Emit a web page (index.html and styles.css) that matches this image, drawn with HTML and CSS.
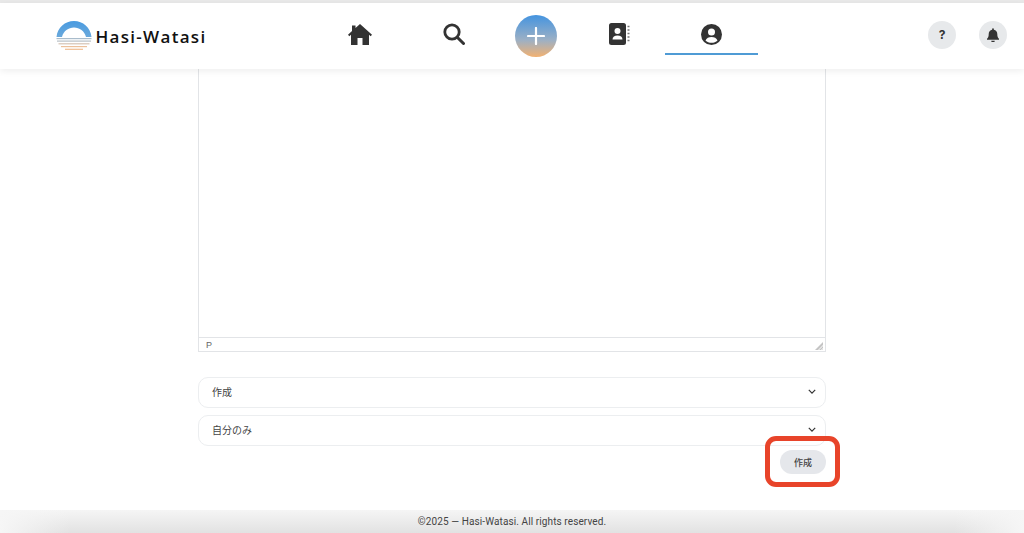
FILE: index.html
```html
<!DOCTYPE html>
<html lang="ja">
<head>
<meta charset="utf-8">
<title>Hasi-Watasi</title>
<link rel="stylesheet" href="styles.css">
</head>
<body>
<div class="page">
  <div class="topstrip"></div>
  <header class="header">
    <a class="logo">
      <svg class="logo-mark" viewBox="0 0 36 32" width="36" height="32">
        <defs>
          <linearGradient id="lg" x1="0" y1="0" x2="0" y2="1">
            <stop offset="0" stop-color="#4a9be0"/>
            <stop offset="1" stop-color="#6aa9dc"/>
          </linearGradient>
        </defs>
        <path d="M0.5 17C1.5 7.500 9 1 18 1s16.500 6.500 17.500 16H30C28.500 11 23.500 7.500 18 7.500S7.500 11 6 17Z" fill="url(#lg)"/>
        <rect x="0.500" y="18" width="35" height="1.200" fill="#a9bccb"/>
        <rect x="1" y="20.500" width="34" height="1.200" fill="#b8bfc5"/>
        <rect x="2.500" y="23.200" width="31" height="1.200" fill="#d5c3b3"/>
        <rect x="5" y="26" width="26" height="1.200" fill="#ecc09b"/>
        <rect x="9" y="28.700" width="18" height="1.200" fill="#f0bd91"/>
      </svg>
      <span class="logo-text">Hasi-Watasi</span>
    </a>
    <nav class="nav">
      <a class="nav-item">
        <svg class="icon-home" viewBox="0 0 24 21" width="24" height="21"><path d="M12 0 24 10.700l-1.300 1.500L21 10.800V21h-6.500v-7h-5v7H3V10.800l-1.700 1.400L0 10.700 4 7.100V1.500h3.500v2.500Z" fill="#333"/></svg>
      </a>
      <a class="nav-item">
        <svg class="icon-search" viewBox="0 0 22 22" width="22" height="22"><circle cx="9" cy="9" r="7.200" fill="none" stroke="#333" stroke-width="2.800"/><path d="M14.500 14.500 20.500 20.500" stroke="#333" stroke-width="3" stroke-linecap="round"/></svg>
      </a>
      <a class="nav-plus">
        <svg viewBox="0 0 18 18" width="18" height="18"><path d="M9 1v16M1 9h16" stroke="#fff" stroke-width="2.200" stroke-linecap="round"/></svg>
      </a>
      <a class="nav-item">
        <svg class="icon-book" viewBox="0 0 21 22" width="21" height="22">
          <path d="M2.500 0h12A2.500 2.500 0 0 1 17 2.500v17a2.500 2.500 0 0 1-2.500 2.500h-12A2.500 2.500 0 0 1 0 19.500v-17A2.500 2.500 0 0 1 2.500 0Z" fill="#333"/>
          <circle cx="8.500" cy="8" r="3" fill="#fff"/>
          <path d="M3.500 16.500c0-2.500 2-4 5-4s5 1.500 5 4Z" fill="#fff"/>
          <path d="M18.500 3.500h2M18.500 7h2M18.500 10.500h2M18.500 14h2M18.500 17.500h2" stroke="#777" stroke-width="1.500"/>
        </svg>
      </a>
      <a class="nav-item is-active">
        <svg viewBox="0 0 21 21" width="21" height="21">
          <circle cx="10.500" cy="10.500" r="10.500" fill="#333"/>
          <circle cx="10.500" cy="8" r="3.500" fill="#fff"/>
          <path d="M4.500 16.500c1-2.500 3.200-3.500 6-3.500s5 1 6 3.500c-1.500 1.500-3.700 2.300-6 2.300s-4.500-.8-6-2.300Z" fill="#fff"/>
        </svg>
      </a>
    </nav>
    <div class="actions">
      <button class="round-btn help">?</button>
      <button class="round-btn">
        <svg viewBox="0 0 14 16" width="12" height="14"><path d="M7 0a1 1 0 0 1 1 1v.8c2.500.5 4 2.500 4 5 0 3 .7 4.200 2 5.700v1H0v-1c1.300-1.500 2-2.700 2-5.700 0-2.500 1.500-4.500 4-5V1a1 1 0 0 1 1-1ZM5 14.800h4a2 2 0 0 1-4 0Z" fill="#333"/></svg>
      </button>
    </div>
  </header>
  <main class="main">
    <div class="editor">
      <div class="editor-area"></div>
      <div class="editor-status">
        <span class="status-path">P</span>
        <svg class="grip" viewBox="0 0 8 8" width="8" height="8"><path d="M8 0v8H0Z" fill="#c4c4c4"/><path d="M8 3v1L4 8H3ZM8 6v1L7 8H6Z" fill="#fff"/></svg>
      </div>
    </div>
    <div class="select select-first"><span>作成</span>
      <svg class="chev" viewBox="0 0 10 6" width="8" height="5"><path d="M1 1l4 4 4-4" fill="none" stroke="#333" stroke-width="1.500"/></svg>
    </div>
    <div class="select"><span>自分のみ</span>
      <svg class="chev" viewBox="0 0 10 6" width="8" height="5"><path d="M1 1l4 4 4-4" fill="none" stroke="#333" stroke-width="1.500"/></svg>
    </div>
    <div class="submit-row">
      <button class="submit">作成</button>
      <div class="callout"></div>
    </div>
  </main>
  <footer class="footer">©2025 — Hasi-Watasi. All rights reserved.</footer>
</div>
</body>
</html>
```
FILE: styles.css
```css
* { box-sizing: border-box; }
html, body { margin: 0; height: 100%; overflow: hidden; background: #fff; }
body { font-family: "Inter", "Noto Sans CJK JP", sans-serif; color: #333; }
.page { height: 533px; display: flex; flex-direction: column; }
.topstrip { height: 3px; background: #e9e9e9; flex: none; }
.header {
  height: 66px; flex: none; display: flex; align-items: center;
  padding: 0 17px 0 55.500px; background: #fff;
  box-shadow: 0 2px 7px rgba(0,0,0,.07); position: relative; z-index: 1;
}
.logo { display: flex; align-items: center; width: 257.500px; gap: 4px; }
.logo-mark { flex: none; }
.logo-text {
  font-family: "Open Sans", sans-serif; font-weight: 600; font-size: 17px;
  letter-spacing: 1.300px; color: #111; white-space: nowrap;
}
.nav { display: flex; align-items: center; height: 100%; }
.nav-item {
  width: 93px; height: 52px; margin-top: -14px; display: flex; align-items: center; justify-content: center;
  border-bottom: 2px solid transparent; padding-top: 12px;
}
.nav-item:nth-child(2) { margin-left: 1px; }
.nav-item:nth-child(4) { padding-left: 2px; }
.nav-item.is-active { border-bottom-color: #4f9bd5; }
.nav-plus {
  width: 42px; height: 42px; border-radius: 50%; margin: 0 15px;
  background: linear-gradient(180deg, #4494e0 0%, #9db0c4 60%, #f2b171 100%);
  display: flex; align-items: center; justify-content: center;
}
.actions { margin-left: auto; display: flex; gap: 23px; margin-top: -3px; }
.round-btn {
  width: 28px; height: 28px; border-radius: 50%; border: 0; padding: 0; background: #e7e9eb;
  display: flex; align-items: center; justify-content: center; color: #333;
}
.help { font: 700 12px "Inter", sans-serif; }
.main { flex: 1; width: 628px; margin-left: 198px; display: flex; flex-direction: column; min-height: 0; }
.editor {
  height: 283px; flex: none; display: flex; flex-direction: column;
  border: 1px solid #e2e4e7; border-top: 0;
}
.editor-area { flex: 1; }
.editor-status {
  height: 14px; border-top: 1px solid #e2e4e7; display: flex; align-items: center;
  justify-content: space-between; padding: 0 2px 0 7px; font-size: 9px; color: #555;
}
.status-path { font-family: "Liberation Sans", sans-serif; color: #666; }
.grip { align-self: flex-end; margin-bottom: 1px; }
.select {
  height: 31px; flex: none; border: 1px solid #eceef0; border-radius: 10px;
  display: flex; align-items: center; justify-content: space-between;
  padding: 0 9px 2px 13px; margin-top: 7px; font-size: 10px; color: #444; background: #fff;
}
.select-first { margin-top: 25px; }
.submit-row { display: flex; justify-content: flex-end; margin-top: 4px; position: relative; }
.submit {
  width: 46px; height: 24px; border: 0; border-radius: 12px; background: #e5e7eb;
  font: 500 9px "Inter", "Noto Sans CJK JP", sans-serif; color: #444; padding: 0;
}
.callout {
  position: absolute; right: -14px; top: -14px; width: 75px; height: 51px;
  border: 5px solid #e8442a; border-radius: 11px;
}
.footer {
  height: 23px; flex: none; display: flex; align-items: center; justify-content: center;
  font-family: "Roboto", sans-serif; font-size: 10px; letter-spacing: .1px; color: #444;
  background:
    linear-gradient(90deg, #f6f6f6 0, rgba(246,246,246,0) 70px, rgba(246,246,246,0) calc(100% - 70px), #f6f6f6 100%),
    linear-gradient(180deg, #f5f5f5, #e2e2e2);
}
```
